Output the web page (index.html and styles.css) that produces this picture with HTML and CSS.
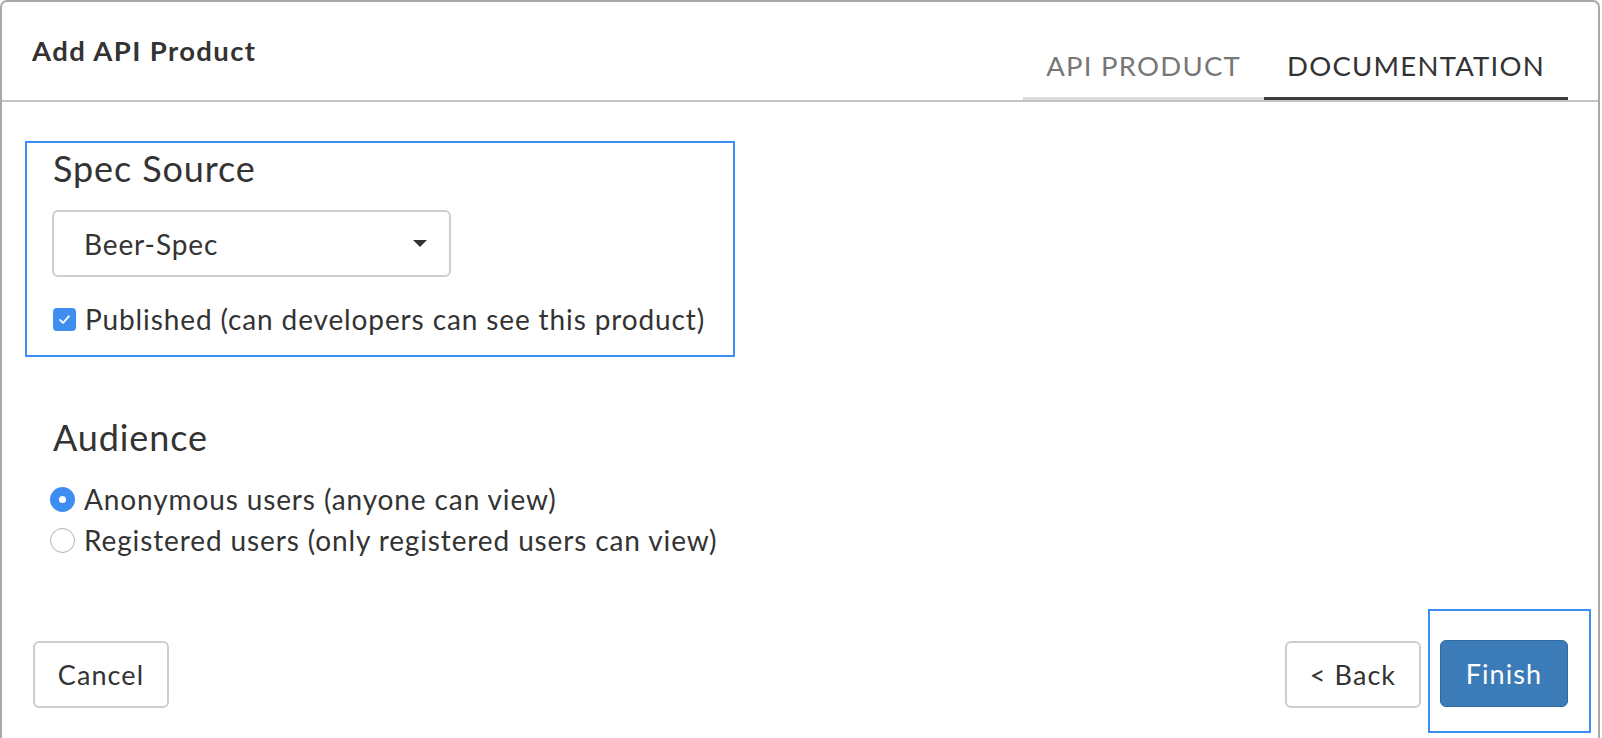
FILE: index.html
```html
<!DOCTYPE html>
<html lang="en">
<head>
  <meta charset="UTF-8" />
  <title>Add API Product</title>
  <link rel="stylesheet" href="styles.css">
</head>
<body>

  <div class="dialog">
    <!-- Header with tabs -->
    <div class="dialog-header">
      <div class="dialog-title">Add API Product</div>
      <div class="tabs">
        <a class="tab">API PRODUCT</a>
        <a class="tab active">DOCUMENTATION</a>
      </div>
    </div>

    <div class="dialog-body">
      <!-- Spec source -->
      <div class="field-group highlight">
        <div class="group-title">Spec Source</div>
        <div class="select">
          <span>Beer-Spec</span>
          <span class="caret"></span>
        </div>
        <label class="check-row">
          <span class="checkbox">
            <svg viewBox="0 0 20 20" width="15" height="15">
              <path d="M4 10.5 L8.2 14.5 L16 5.5" fill="none" stroke="#fff" stroke-width="2.4" stroke-linecap="round" stroke-linejoin="round"/>
            </svg>
          </span>
          Published (can developers can see this product)
        </label>
      </div>

      <!-- Audience -->
      <div class="field-group audience">
        <div class="group-title">Audience</div>
        <label class="radio-row">
          <span class="radio checked"></span>
          Anonymous users (anyone can view)
        </label>
        <label class="radio-row">
          <span class="radio"></span>
          Registered users (only registered users can view)
        </label>
      </div>
    </div>

    <!-- Footer buttons -->
    <div class="dialog-footer">
      <a class="btn">Cancel</a>
      <div class="footer-right">
        <a class="btn">&lt; Back</a>
        <div class="finish-wrap">
          <a class="btn btn-primary">Finish</a>
        </div>
      </div>
    </div>
  </div>

</body>
</html>
```

FILE: styles.css
```css
body {
  margin: 0;
  padding: 0;
  background: #fff;
  font-family: 'Lato', 'Open Sans', sans-serif;
  color: #333;
  letter-spacing: 0.055em;
  overflow: hidden;
}

.dialog {
  margin-right: 2px;
  height: 780px;
  border: 2px solid #a8a8a8;
  border-bottom: none;
  border-radius: 7px 7px 0 0;
  box-sizing: border-box;
}

/* Header */
.dialog-header {
  display: flex;
  justify-content: space-between;
  align-items: flex-end;
  height: 100px;
  border-bottom: 2px solid #c4c4c4;
  box-sizing: border-box;
  padding: 0 30px 0 30px;
}

.dialog-title {
  align-self: flex-start;
  margin-top: 33px;
  font-size: 27.5px;
  font-weight: bold;
  letter-spacing: 0.05em;
  line-height: 32px;
}

.tabs {
  display: flex;
}

.tab {
  padding: 0 23px;
  font-size: 27.5px;
  letter-spacing: 0.045em;
  line-height: 63px;
  color: #777;
  border-bottom: 3px solid #dcdcdc;
  cursor: pointer;
}

.tab.active {
  color: #333;
  border-bottom-color: #3c3c3c;
}

/* Body */
.dialog-body {
  padding: 39px 0 0 23px;
}

.field-group {
  box-sizing: border-box;
  border: 2px solid transparent;
  padding: 0 25px 19px 25px;
  white-space: nowrap;
}

.field-group.highlight {
  width: 710px;
  border-color: #3b8ff2;
}

.group-title {
  font-size: 36px;
  line-height: 50px;
  padding-left: 1px;
}

.select {
  display: flex;
  justify-content: space-between;
  align-items: center;
  width: 399px;
  height: 67px;
  margin-top: 17px;
  padding: 0 22px 0 30px;
  box-sizing: border-box;
  border: 2px solid #cfcfcf;
  border-radius: 6px;
  font-size: 28px;
}

.caret {
  width: 0;
  height: 0;
  border-left: 7px solid transparent;
  border-right: 7px solid transparent;
  border-top: 7px solid #333;
}

.check-row,
.radio-row {
  display: flex;
  align-items: center;
  gap: 9px;
  font-size: 28px;
}

.check-row {
  margin-top: 25px;
  line-height: 34px;
}

.checkbox {
  display: flex;
  align-items: center;
  justify-content: center;
  width: 23px;
  height: 23px;
  margin-left: 1px;
  border-radius: 4px;
  background: #3d8ef0;
}

.audience {
  margin-top: 53px;
}

.audience .radio-row:first-of-type {
  margin-top: 17px;
}

.radio-row {
  line-height: 41px;
}

.radio {
  width: 25px;
  height: 25px;
  margin-left: -2px;
  box-sizing: border-box;
  border: 1.5px solid #b0b0b0;
  border-radius: 50%;
  background: #fff;
  position: relative;
}

.radio.checked {
  border: none;
  background: #3d8ef0;
}

.radio.checked::after {
  content: "";
  position: absolute;
  top: 9px;
  left: 9px;
  width: 7px;
  height: 7px;
  border-radius: 50%;
  background: #fff;
}

/* Footer */
.dialog-footer {
  display: flex;
  justify-content: space-between;
  align-items: flex-start;
  padding: 27px 7px 0 31px;
}

.footer-right {
  display: flex;
  align-items: flex-start;
  gap: 7px;
}

.btn {
  display: inline-flex;
  align-items: center;
  justify-content: center;
  width: 136px;
  height: 67px;
  margin-top: 32px;
  box-sizing: border-box;
  border: 2px solid #cdcdcd;
  border-radius: 6px;
  background: #fff;
  font-size: 27px;
  letter-spacing: 0.04em;
  color: #333;
  cursor: pointer;
}

.finish-wrap {
  border: 2px solid #3b8ff2;
  padding: 29px 21px 24px 10px;
}

.btn-primary {
  width: 128px;
  margin-top: 0;
  border: 1px solid #2f6ba3;
  background: #3b7bb7;
  color: #fff;
}
```
